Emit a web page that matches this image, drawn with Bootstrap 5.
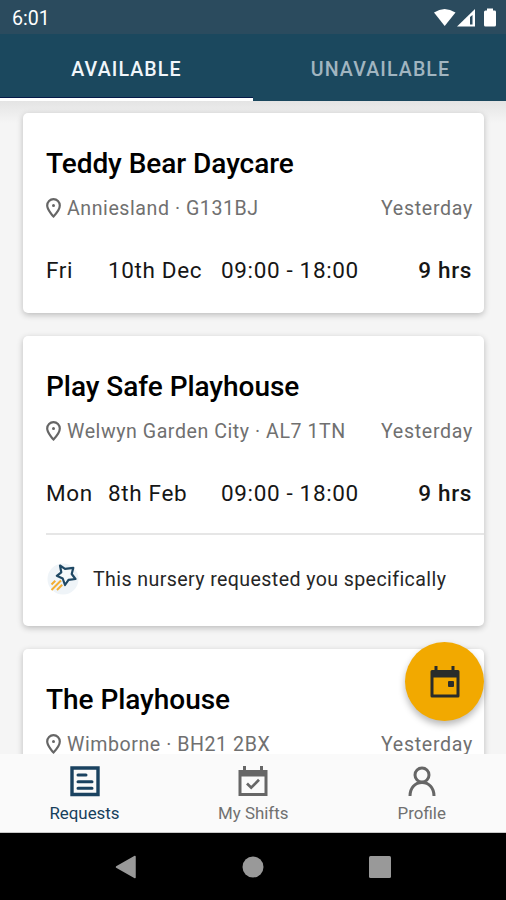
<!DOCTYPE html>
<html lang="en">
<head>
<meta charset="utf-8">
<meta name="viewport" content="width=device-width, initial-scale=1">
<title>Requests</title>
<link href="https://cdn.jsdelivr.net/npm/bootstrap@5.3.0/dist/css/bootstrap.min.css" rel="stylesheet">
<style>
body{font-family:Roboto,"Liberation Sans",sans-serif;background:#000;width:506px;height:900px;overflow:hidden}
svg{display:block;flex-shrink:0}
.status-bar{height:34px;background:#2b4b5e;color:#fff;font-size:19.6px;padding:2px 10px 0 12px}
.status-bar span{padding-top:2px}
.tab-bar{height:67px;background:#1b485e;font-size:19.6px;letter-spacing:1.1px;font-weight:500}
.tab-bar button{color:#a1b5c0;border:0;background:none;letter-spacing:inherit;font-weight:inherit;padding:5px 0 0 2px}
.tab-bar .active{color:#f1f6fa;border-bottom:3px solid #fff;box-shadow:inset 0 -1px #061b49;padding:8px 0 0}
.feed{height:653px;background:linear-gradient(#e4e4e4,#f5f5f5 22px);padding:12px 22px 0 23px;display:flex;flex-direction:column;gap:23px}
.shift{flex-shrink:0;border:0;border-radius:5px;box-shadow:0 2px 6px rgba(0,0,0,.24);padding:33px 0 28px 23px;color:#000}
.shift h2{font-size:28px;line-height:36px;font-weight:500;margin:0;letter-spacing:-.05px}
.place{color:#707070;font-size:19.6px;line-height:24px;letter-spacing:.55px;margin-top:15px;padding-right:11px}
.place .ms-auto{letter-spacing:.7px}
.place svg{margin:0 6px 2px 0}
.when{font-size:22.5px;line-height:30px;letter-spacing:.65px;margin-top:34px;padding-right:12px;color:#161616}
.day{width:62px}.date{width:113px}
.hours{font-weight:500}
.note{border-top:2px solid #e6e6e6;margin-top:25px;padding:28px 0 3px;font-size:19.6px;line-height:31px;letter-spacing:.4px;color:#262626}
.note svg{margin:0 14px 0 1px}
.fab{position:absolute;left:405px;top:642px;width:79px;height:79px;background:#f2a900;border:0;box-shadow:0 4px 7px rgba(0,0,0,.28)}
.tabs-bottom{position:relative;height:79px;background:#fafafa;border-bottom:1px solid #c8c8c8;font-size:16.900px;color:#707070}
.tabs-bottom div{padding-top:11px;line-height:24px;gap:4px}
.tabs-bottom .current{color:#163f5c}
.system-bar{height:67px;padding:0 115px}
</style>
<script src="https://cdn.jsdelivr.net/npm/bootstrap@5.3.0/dist/js/bootstrap.bundle.min.js"></script>
</head>
<body>
<svg width="0" height="0" class="d-none">
 <symbol id="pin" viewBox="0 0 15 20"><path d="M7.500 1.200C4 1.200 1.200 4 1.200 7.500c0 4.300 6.300 10.900 6.300 10.900s6.300-6.600 6.300-10.900C13.800 4 11 1.200 7.500 1.200z" fill="none" stroke="#666" stroke-width="2.200"/><circle cx="7.500" cy="7.500" r="1.500" fill="#666"/></symbol>
</svg>
<header class="status-bar d-flex align-items-center justify-content-between">
 <span>6:01</span>
 <svg width="62" height="20" viewBox="434 7 62 20" fill="#fff"><path d="M434 11.500Q444.500 4.500 455.500 11.500L444.700 25z"/><path d="M457 25.500L475 8v17.500z"/><path d="M470 16l2.500-2v9.500H470z" fill="#2b4b5e"/><path d="M487 7.500h6v2h1.500a1.500 1.500 0 0 1 1.500 1.500v13a1.500 1.500 0 0 1-1.500 1.500h-9A1.500 1.500 0 0 1 484 24V11a1.500 1.500 0 0 1 1.500-1.500H487z"/></svg>
</header>
<nav class="tab-bar d-flex">
 <button class="w-50 active">AVAILABLE</button>
 <button class="w-50">UNAVAILABLE</button>
</nav>
<main class="feed overflow-hidden">
 <article class="card shift">
  <h2>Teddy Bear Daycare</h2>
  <div class="place d-flex align-items-center"><svg width="15" height="20"><use href="#pin"/></svg><span>Anniesland · G131BJ</span><span class="ms-auto">Yesterday</span></div>
  <div class="when d-flex"><span class="day">Fri</span><span class="date">10th Dec</span><span>09:00 - 18:00</span><span class="hours ms-auto">9 hrs</span></div>
 </article>
 <article class="card shift">
  <h2>Play Safe Playhouse</h2>
  <div class="place d-flex align-items-center"><svg width="15" height="20"><use href="#pin"/></svg><span>Welwyn Garden City · AL7 1TN</span><span class="ms-auto">Yesterday</span></div>
  <div class="when d-flex"><span class="day">Mon</span><span class="date">8th Feb</span><span>09:00 - 18:00</span><span class="hours ms-auto">9 hrs</span></div>
  <div class="note d-flex align-items-center">
   <svg width="32" height="32" viewBox="0 0 32 32"><circle cx="16" cy="16" r="15.500" fill="#eff4f8"/><path d="M13 2.500L18 5.800 26.300 4.800 24.700 11 28.500 16 21.500 16.800 18 22 15.700 15.500 9.800 12.800 14.300 9.300z" fill="#f6f9fb" stroke="#1f4864" stroke-width="2.200" stroke-linejoin="round"/><path d="M4.500 21.500l3.800-3.800M4.500 27l9.500-9.500M10 27l5.200-5.200" stroke="#f3ae32" stroke-width="2"/></svg>
   <span>This nursery requested you specifically</span>
  </div>
 </article>
 <article class="card shift">
  <h2>The Playhouse</h2>
  <div class="place d-flex align-items-center"><svg width="15" height="20"><use href="#pin"/></svg><span>Wimborne · BH21 2BX</span><span class="ms-auto">Yesterday</span></div>
 </article>
</main>
<button class="fab rounded-circle d-flex align-items-center justify-content-center p-0" aria-label="Calendar">
 <svg width="30" height="33" viewBox="0 0 30 33" fill="#292c2b"><path fill-rule="evenodd" d="M4.500 1h3v4h14V1h3v4H28a1.500 1.500 0 0 1 1.500 1.500V31A1.500 1.500 0 0 1 28 32.500H2A1.500 1.500 0 0 1 .5 31V6.500A1.500 1.500 0 0 1 2 5h2.500zM3.500 12.500v17h23v-17z"/><rect x="18" y="16" width="6" height="6" rx="1"/></svg>
</button>
<nav class="tabs-bottom d-flex">
 <div class="current d-flex flex-column align-items-center" style="width:33.4%"><svg width="30" height="32" viewBox="0 0 30 32" fill="none" stroke="#1a4260"><path d="M2 3h26v26.500H2z" stroke-width="3.400"/><path d="M8 10h8M8 16.700h14M8 23.300h14" stroke-width="3" stroke-linecap="round"/></svg><span>Requests</span></div>
 <div class="d-flex flex-column align-items-center" style="width:33.3%"><svg width="30" height="32" viewBox="0 0 30 32" fill="#666"><path fill-rule="evenodd" d="M5 1h3v4h14V1h3v4h4.500v26H.5V5H5zM3.500 11.500V28h23V11.500z"/><path d="M9 18.500l4.200 4.200L21 14.800" fill="none" stroke="#666" stroke-width="2.700"/></svg><span>My Shifts</span></div>
 <div class="d-flex flex-column align-items-center" style="width:33.3%"><svg width="30" height="32" viewBox="0 0 30 32" fill="none" stroke="#666" stroke-width="3"><circle cx="15" cy="10" r="7"/><path d="M3 31c0-8 5-13.500 12-13.500S27 23 27 31"/></svg><span>Profile</span></div>
</nav>
<footer class="system-bar bg-black d-flex align-items-center justify-content-between">
 <svg width="21" height="24" viewBox="0 0 21 24"><path d="M1.500 12L20 1.500v21z" fill="#999" stroke="#999" stroke-width="1.500" stroke-linejoin="round"/></svg>
 <svg width="22" height="22"><circle cx="11" cy="11" r="10.500" fill="#999"/></svg>
 <svg width="22" height="22"><rect width="22" height="22" rx="1.500" fill="#999"/></svg>
</footer>
</body>
</html>
